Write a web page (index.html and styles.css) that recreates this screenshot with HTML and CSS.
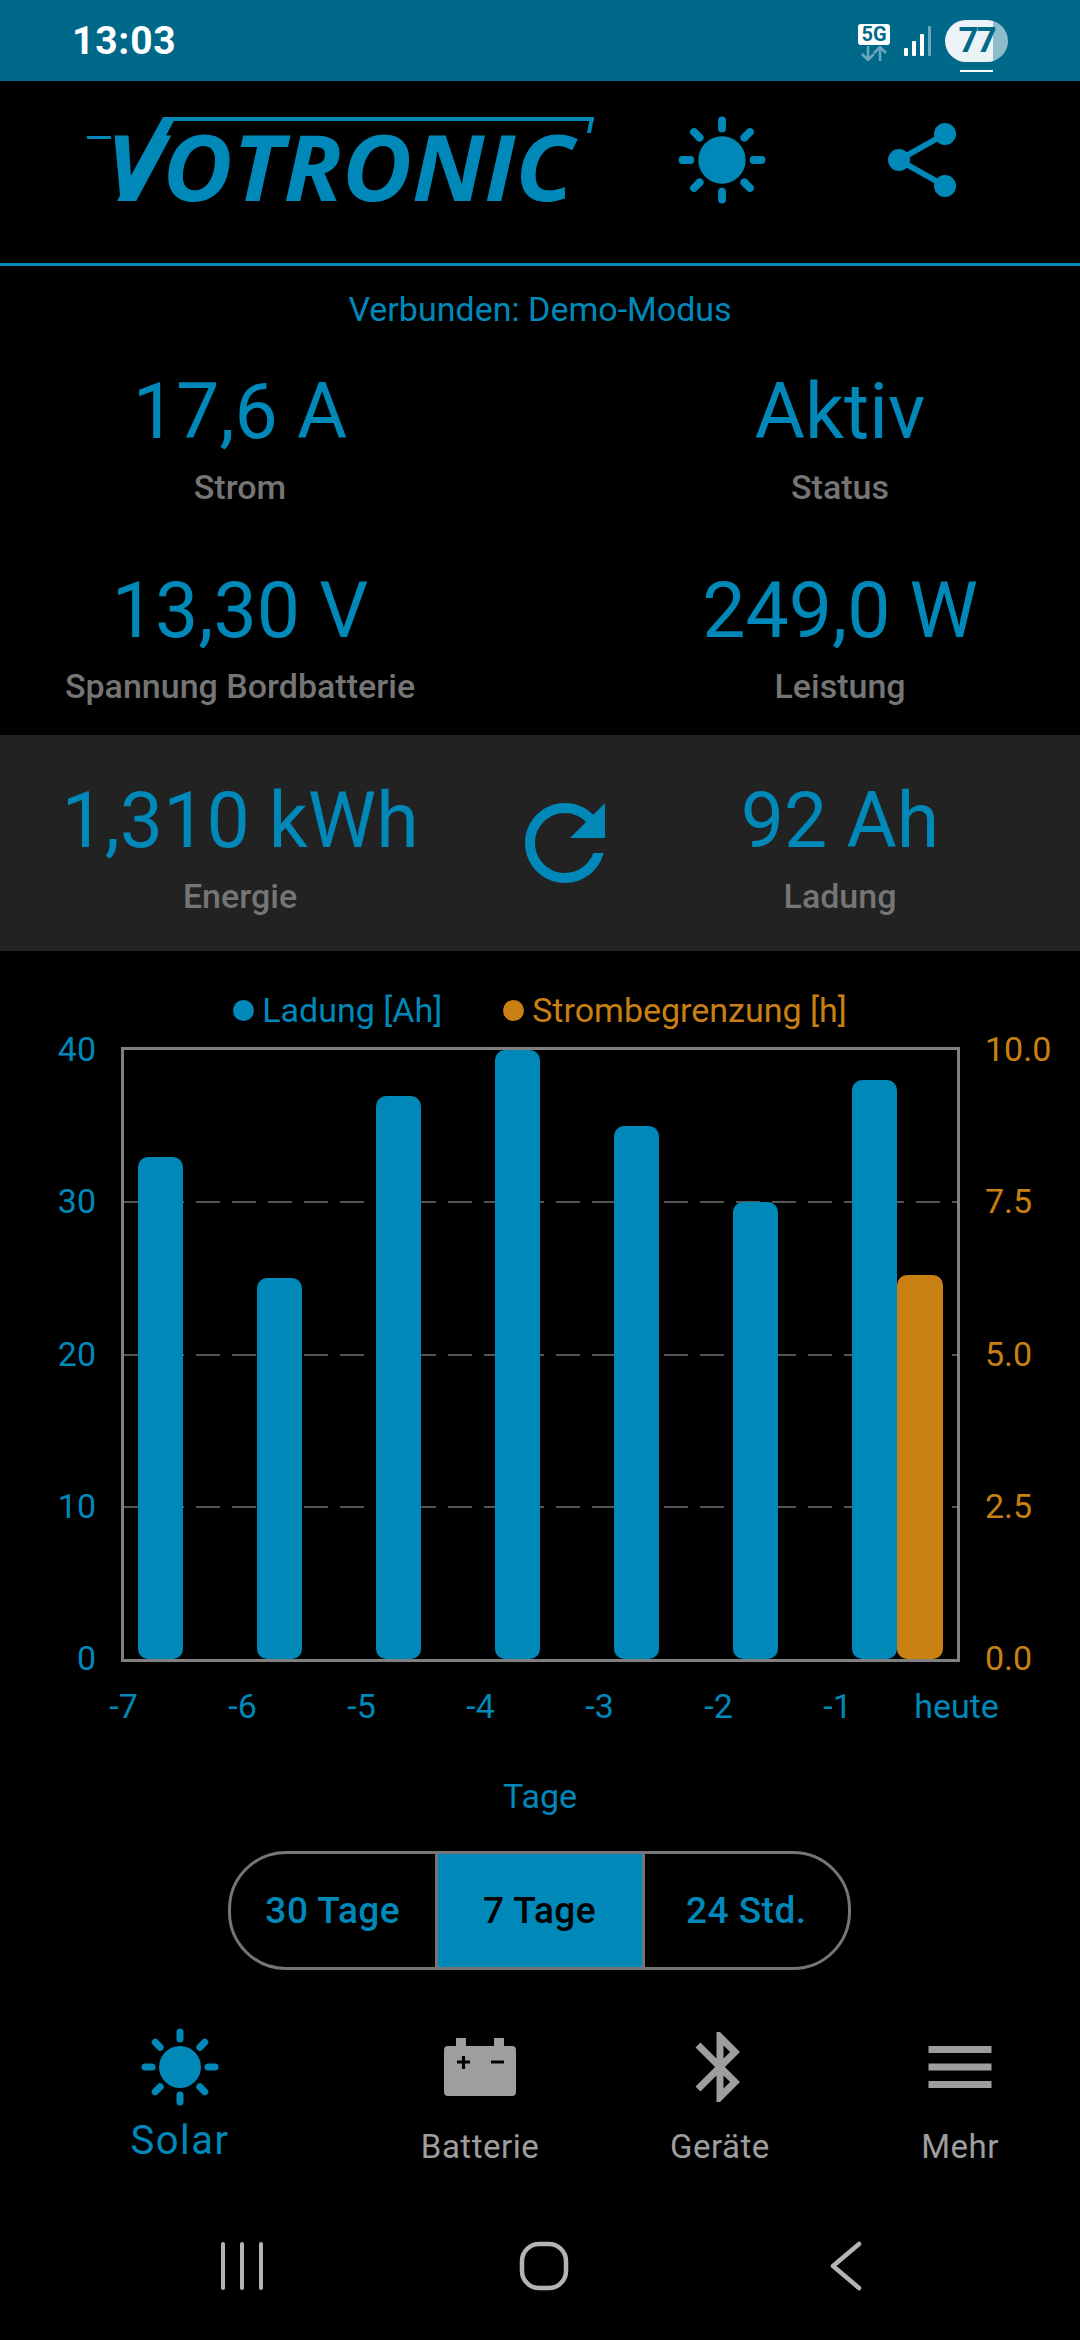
FILE: index.html
```html
<!DOCTYPE html>
<html lang="de">
<head>
    <meta charset="UTF-8">
    <meta name="viewport" content="width=device-width, initial-scale=1.0">
    <title>Votronic Solar</title>
    <link rel="stylesheet" href="styles.css">
</head>
<body>
    <svg class="defs" width="0" height="0">
        <symbol id="sun" viewBox="-39 -39 78 78">
            <circle r="21" fill="currentColor"/>
            <g stroke="currentColor" stroke-width="7" stroke-linecap="round">
                <line y1="-28" y2="-35"/>
                <line y1="-28" y2="-35" transform="rotate(45)"/>
                <line y1="-28" y2="-35" transform="rotate(90)"/>
                <line y1="-28" y2="-35" transform="rotate(135)"/>
                <line y1="-28" y2="-35" transform="rotate(180)"/>
                <line y1="-28" y2="-35" transform="rotate(225)"/>
                <line y1="-28" y2="-35" transform="rotate(270)"/>
                <line y1="-28" y2="-35" transform="rotate(315)"/>
            </g>
        </symbol>
    </svg>

    <div class="status-bar">
        <span class="clock">13:03</span>
        <div class="status-icons">
            <div class="net">
                <span class="net-badge">5G</span>
                <svg class="net-arrows" width="32" height="15" viewBox="0 0 32 15" fill="none" stroke="#6ea6b9" stroke-width="2.5">
                    <path d="M10 0v14M4 8l6 6 6-6"/>
                    <path d="M22 15V1M16 7l6-6 6 6"/>
                </svg>
            </div>
            <svg class="signal" width="27" height="30" viewBox="0 0 27 30">
                <rect x="0" y="22" width="4" height="8" rx="1" fill="#fff"/>
                <rect x="8" y="15" width="4" height="15" rx="1" fill="#fff"/>
                <rect x="16" y="8" width="4" height="22" rx="1" fill="#fff"/>
                <rect x="24" y="0" width="3" height="30" rx="1" fill="#6ea6b9"/>
            </svg>
            <div class="battery-pill">77<i class="pill-line"></i></div>
        </div>
    </div>

    <header class="top-bar">
        <svg class="logo" width="507" height="128" viewBox="0 -16 507 128" role="img" aria-label="Votronic">
            <rect x="0" y="19" width="24" height="3"/>
            <polygon points="30,84 44,84 89,0 76,0"/>
            <rect x="76" y="0" width="431" height="4"/>
            <polygon points="503,0 507,0 504,16 500,16"/>
            <text x="19" y="84" textLength="468" lengthAdjust="spacingAndGlyphs">VOTRONIC</text>
        </svg>
        <svg class="top-sun" width="88" height="88"><use href="#sun"/></svg>
        <svg class="top-share" width="68" height="74" viewBox="0 0 68 74">
            <path d="M57 11L11 37L57 63" fill="none" stroke="currentColor" stroke-width="6"/>
            <circle cx="57" cy="11" r="11" fill="currentColor"/>
            <circle cx="11" cy="37" r="11" fill="currentColor"/>
            <circle cx="57" cy="63" r="11" fill="currentColor"/>
        </svg>
    </header>

    <p class="connection">Verbunden: Demo-Modus</p>

    <section class="stats">
        <div class="stat">
            <div class="stat-value">17,6 A</div>
            <div class="stat-label">Strom</div>
        </div>
        <div class="stat">
            <div class="stat-value">Aktiv</div>
            <div class="stat-label">Status</div>
        </div>
        <div class="stat">
            <div class="stat-value">13,30 V</div>
            <div class="stat-label">Spannung Bordbatterie</div>
        </div>
        <div class="stat">
            <div class="stat-value">249,0 W</div>
            <div class="stat-label">Leistung</div>
        </div>
    </section>

    <section class="totals">
        <div class="stat">
            <div class="stat-value">1,310 kWh</div>
            <div class="stat-label">Energie</div>
        </div>
        <svg class="refresh" width="120" height="120" viewBox="0 0 24 24">
            <path fill="currentColor" d="M17.65 6.35C16.2 4.9 14.21 4 12 4c-4.42 0-7.99 3.58-7.99 8s3.57 8 7.99 8c3.73 0 6.84-2.55 7.73-6h-2.08c-.82 2.33-3.04 4-5.65 4-3.31 0-6-2.69-6-6s2.69-6 6-6c1.66 0 3.14.69 4.22 1.78L13 11h7V4l-2.35 2.35z"/>
        </svg>
        <div class="stat">
            <div class="stat-value">92 Ah</div>
            <div class="stat-label">Ladung</div>
        </div>
    </section>

    <section class="chart">
        <div class="legend">
            <span class="legend-item"><i class="dot"></i>Ladung [Ah]</span>
            <span class="legend-item orange"><i class="dot"></i>Strombegrenzung [h]</span>
        </div>
        <div class="chart-body">
            <div class="axis axis-left">
                <span>40</span><span>30</span><span>20</span><span>10</span><span>0</span>
            </div>
            <div class="plot">
                <i class="grid-line line-1"></i>
                <i class="grid-line line-2"></i>
                <i class="grid-line line-3"></i>
                <div class="day"><i class="bar" style="height:82.5%"></i></div>
                <div class="day"><i class="bar" style="height:62.5%"></i></div>
                <div class="day"><i class="bar" style="height:92.5%"></i></div>
                <div class="day"><i class="bar" style="height:100%"></i></div>
                <div class="day"><i class="bar" style="height:87.5%"></i></div>
                <div class="day"><i class="bar" style="height:75%"></i></div>
                <div class="day"><i class="bar" style="height:95%"></i><i class="bar bar-orange" style="height:63%"></i></div>
            </div>
            <div class="axis axis-right">
                <span>10.0</span><span>7.5</span><span>5.0</span><span>2.5</span><span>0.0</span>
            </div>
        </div>
        <div class="x-labels">
            <span>-7</span><span>-6</span><span>-5</span><span>-4</span><span>-3</span><span>-2</span><span>-1</span><span>heute</span>
        </div>
        <div class="x-title">Tage</div>
    </section>

    <div class="range">
        <div class="range-item">30 Tage</div>
        <div class="range-item active">7 Tage</div>
        <div class="range-item">24 Std.</div>
    </div>

    <nav class="tabs">
        <div class="tab active">
            <div class="tab-icon"><svg width="78" height="78"><use href="#sun"/></svg></div>
            <div class="tab-label">Solar</div>
        </div>
        <div class="tab">
            <div class="tab-icon">
                <svg width="84" height="84" viewBox="0 0 84 84">
                    <rect x="18" y="13" width="10" height="10" fill="currentColor"/>
                    <rect x="56" y="13" width="10" height="10" fill="currentColor"/>
                    <rect x="6" y="21" width="72" height="50" rx="4" fill="currentColor"/>
                    <path d="M19 37h13M25.5 31v13M53 37h13" stroke="#000" stroke-width="3.2"/>
                </svg>
            </div>
            <div class="tab-label">Batterie</div>
        </div>
        <div class="tab">
            <div class="tab-icon">
                <svg width="84" height="84" viewBox="0 0 24 24">
                    <path fill="currentColor" d="M17.71 7.71L12 2h-1v7.59L6.41 5 5 6.41 10.59 12 5 17.59 6.41 19 11 14.41V22h1l5.71-5.71-4.3-4.29 4.3-4.29zM13 5.83l1.88 1.88L13 9.59V5.83zm1.88 10.46L13 18.17v-3.76l1.88 1.88z"/>
                </svg>
            </div>
            <div class="tab-label">Geräte</div>
        </div>
        <div class="tab">
            <div class="tab-icon">
                <svg width="84" height="84" viewBox="0 0 24 24">
                    <path fill="currentColor" d="M3 18h18v-2H3v2zm0-5h18v-2H3v2zm0-7v2h18V6H3z"/>
                </svg>
            </div>
            <div class="tab-label">Mehr</div>
        </div>
    </nav>

    <div class="system-nav">
        <svg width="46" height="50" viewBox="0 0 46 50" stroke="#b4b4b4" stroke-width="4" stroke-linecap="round">
            <line x1="4" y1="3" x2="4" y2="47"/>
            <line x1="23" y1="3" x2="23" y2="47"/>
            <line x1="42" y1="3" x2="42" y2="47"/>
        </svg>
        <svg width="50" height="50" viewBox="0 0 50 50">
            <rect x="3" y="3" width="44" height="44" rx="17" fill="none" stroke="#b4b4b4" stroke-width="4.5"/>
        </svg>
        <svg width="32" height="50" viewBox="0 0 32 50" fill="none" stroke="#b4b4b4" stroke-width="4.5" stroke-linecap="round" stroke-linejoin="round">
            <path d="M29 3L3 25L29 47"/>
        </svg>
    </div>
</body>
</html>
```

FILE: styles.css
```css
html, body {
    margin: 0;
    padding: 0;
}
body {
    width: 1080px;
    height: 2340px;
    overflow: hidden;
    background: #000;
    color: #0088b9;
    font-family: Roboto, "Liberation Sans", sans-serif;
}
.defs {
    display: block;
    height: 0;
}

/* status bar */
.status-bar {
    display: flex;
    align-items: center;
    justify-content: space-between;
    height: 81px;
    padding: 0 72px 0 72px;
    background: #006889;
    color: #fff;
    box-sizing: border-box;
}
.clock {
    font-size: 39px;
    font-weight: 700;
    letter-spacing: 0.8px;
}
.status-icons {
    display: flex;
    align-items: center;
    gap: 14px;
}
.net {
    display: flex;
    flex-direction: column;
    align-items: center;
    gap: 1px;
    margin-top: 4px;
}
.net-badge {
    width: 32px;
    height: 21px;
    background: #fff;
    border-radius: 3px;
    color: #006889;
    font-size: 20px;
    font-weight: 700;
    line-height: 21px;
    text-align: center;
}
.signal {
    margin-top: 1px;
}
.battery-pill {
    position: relative;
    width: 63px;
    height: 42px;
    border-radius: 21px;
    background: linear-gradient(90deg, #ecf3f6 0 48px, #8fbccb 48px);
    color: #006889;
    font-size: 35px;
    font-weight: 700;
    letter-spacing: -2px;
    line-height: 42px;
    text-align: center;
}
.pill-line {
    position: absolute;
    left: 15px;
    bottom: -10px;
    width: 33px;
    height: 1.5px;
    background: #fff;
}

/* header */
.top-bar {
    display: flex;
    align-items: center;
    height: 185px;
    padding: 0 0 25px 87px;
    border-bottom: 3px solid #0088b9;
    box-sizing: border-box;
}
.logo {
    fill: #0088b9;
    margin: -16px 0 -26px;
}
.logo text {
    font-family: "Open Sans", sans-serif;
    font-size: 92px;
    font-weight: 700;
    font-style: italic;
}
.top-sun {
    margin-left: 84px;
}
.top-share {
    margin-left: 122px;
}

.connection {
    margin: 0;
    padding-top: 21px;
    font-size: 34px;
    line-height: 44px;
    text-align: center;
}

/* values */
.stats {
    display: grid;
    grid-template-columns: 480px 480px;
    column-gap: 120px;
    row-gap: 57px;
    padding: 36px 0 27px;
}
.stat {
    text-align: center;
}
.stat-value {
    font-size: 77px;
    font-weight: 400;
    line-height: 90px;
}
.stat-label {
    margin-top: 8px;
    color: #757575;
    font-size: 34px;
    font-weight: 500;
    line-height: 44px;
}
.totals {
    display: grid;
    grid-template-columns: 480px 170px 380px;
    height: 216px;
    padding-top: 41px;
    background: #222;
    box-sizing: border-box;
}
.refresh {
    justify-self: center;
    margin-top: 7px;
}

/* chart */
.chart {
    padding-top: 37px;
}
.legend {
    display: flex;
    justify-content: center;
    gap: 61px;
    font-size: 34px;
    line-height: 44px;
}
.legend-item {
    display: flex;
    align-items: center;
    gap: 8px;
}
.legend-item.orange {
    color: #c88013;
}
.dot {
    width: 21px;
    height: 21px;
    border-radius: 50%;
    background: currentColor;
}
.chart-body {
    display: grid;
    grid-template-columns: 121px 839px 120px;
    margin-top: 15px;
}
.axis {
    display: flex;
    flex-direction: column;
    justify-content: space-between;
    padding: 2px 0 4px;
    font-size: 34px;
}
.axis span {
    height: 0;
    line-height: 0;
}
.axis-left {
    padding-right: 25px;
    text-align: right;
}
.axis-right {
    padding-left: 25px;
    color: #c88013;
}
.plot {
    position: relative;
    display: grid;
    grid-template-columns: repeat(7, 119px);
    height: 609px;
    border: 3px solid #808080;
}
.grid-line {
    position: absolute;
    left: 0;
    right: 0;
    height: 2px;
    margin-top: -1px;
    background: repeating-linear-gradient(90deg, #555 0 24px, transparent 24px 36px);
}
.line-1 { top: 25%; }
.line-2 { top: 50%; }
.line-3 { top: 75%; }
.day {
    position: relative;
    display: flex;
    align-items: flex-end;
    height: 609px;
    padding-left: 13.5px;
}
.bar {
    width: 45.5px;
    border-radius: 10px;
    background: #0088b9;
}
.bar-orange {
    background: #c88013;
}
.x-labels {
    display: grid;
    grid-template-columns: repeat(8, 119px);
    margin-top: 22px;
    padding-left: 64px;
    font-size: 34px;
    line-height: 44px;
    text-align: center;
}
.x-title {
    margin-top: 46px;
    font-size: 34px;
    line-height: 44px;
    text-align: center;
}

/* range switch */
.range {
    display: grid;
    grid-template-columns: 1fr 210px 1fr;
    width: 623px;
    height: 119px;
    margin: 33px 0 0 228px;
    border: 3px solid #757575;
    border-radius: 58px;
    box-sizing: border-box;
    overflow: hidden;
    font-size: 37px;
    font-weight: 500;
    letter-spacing: 0.5px;
    line-height: 113px;
    text-align: center;
}
.range-item.active {
    background: #0088b9;
    border-left: 3px solid #757575;
    border-right: 3px solid #757575;
    color: #000;
}

/* bottom tabs */
.tabs {
    display: grid;
    grid-template-columns: 360px 240px 240px 240px;
    margin-top: 55px;
    color: #9e9e9e;
    text-align: center;
}
.tab-icon {
    display: flex;
    align-items: center;
    justify-content: center;
    height: 84px;
}
.tab-label {
    margin-top: 18px;
    font-size: 33px;
    line-height: 40px;
    letter-spacing: 0.5px;
}
.tab.active {
    color: #0088b9;
}
.tab.active .tab-label {
    margin-top: 12px;
    font-size: 40px;
    letter-spacing: 1.5px;
}

.system-nav {
    display: grid;
    grid-template-columns: repeat(3, 302px);
    justify-items: center;
    margin-top: 74px;
    padding-left: 91px;
}
```
